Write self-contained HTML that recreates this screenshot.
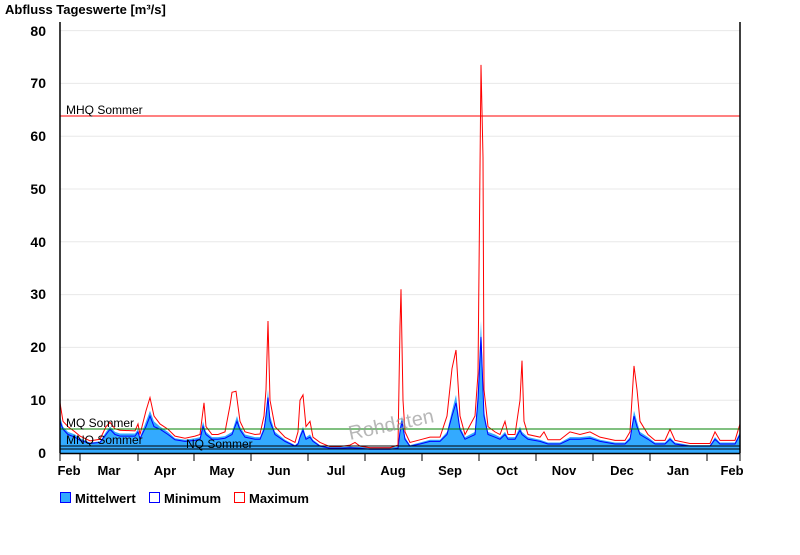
<!DOCTYPE html>
<html><head><meta charset="utf-8"><style>
body{margin:0;background:#fff;width:800px;height:550px;overflow:hidden;font-family:"Liberation Sans",sans-serif}
svg text{font-family:"Liberation Sans",sans-serif}
</style></head><body>
<svg width="800" height="550" xmlns="http://www.w3.org/2000/svg">
<text x="5" y="14" font-size="13" font-weight="bold">Abfluss Tageswerte [m³/s]</text>
<g stroke="#e8e8e8" stroke-width="1">
<line x1="60" x2="740" y1="400.2" y2="400.2"/><line x1="60" x2="740" y1="347.4" y2="347.4"/>
<line x1="60" x2="740" y1="294.6" y2="294.6"/><line x1="60" x2="740" y1="241.8" y2="241.8"/>
<line x1="60" x2="740" y1="189" y2="189"/><line x1="60" x2="740" y1="136.2" y2="136.2"/>
<line x1="60" x2="740" y1="83.4" y2="83.4"/><line x1="60" x2="740" y1="30.6" y2="30.6"/>
</g>
<g font-size="14" font-weight="bold" text-anchor="end">
<text x="46" y="458">0</text><text x="46" y="405">10</text><text x="46" y="352">20</text><text x="46" y="299">30</text>
<text x="46" y="247">40</text><text x="46" y="194">50</text><text x="46" y="141">60</text><text x="46" y="88">70</text><text x="46" y="36">80</text>
</g>
<rect x="60" y="447" width="680" height="6" fill="#33aaff"/>
<g transform="translate(0,453) scale(1,-5.28)">
<polygon fill="#33aaff" points="60,0 60,7 63,5 68,4 75,3.5 80,2.8 90,2 100,2.2 106,4 110,5 115,4 120,3.7 135,3.7 138,4.5 140,3 146,6 150,8 154,6 160,5 168,4 175,2.8 185,2.5 195,2.8 200,3 203,6 206,4 212,3 218,3 225,3.2 232,4 237,7 240,5 245,3.5 255,3 260,3 264,5 266,8 268,12 270,7 275,4 285,2.5 295,1.5 298,2 300,3.5 303,5 306,3 310,3.5 313,2.5 320,1.5 330,1 340,1 350,1.2 360,1 370,0.8 390,0.8 398,1 400,5 402,7 405,3 410,1.5 420,2 430,2.5 440,2.5 447,4 452,8 456,11 460,5 465,3 475,4 478,12 481,25 484,8 488,4 495,3.5 500,3 505,4 508,3 515,3 520,5 522,4 528,3 540,2.5 548,2 560,2 570,3 580,3 590,3.2 600,2.5 615,2 625,2 630,3 634,8 637,6 640,4 648,3 655,2 665,2 670,3 675,2 690,1.5 710,1.5 715,3 720,2 735,2 740,4 740,0"/>
<polyline fill="none" stroke="#0000ff" stroke-width="1" vector-effect="non-scaling-stroke" points="60,6 63,4.5 68,3.5 75,3 80,2.4 90,1.8 100,2 106,3.5 110,4.5 115,3.5 120,3.2 135,3.2 138,4 140,2.7 146,5 150,7 154,5 160,4.5 168,3.5 175,2.5 185,2.2 195,2.4 200,2.6 203,5 206,3.5 212,2.6 218,2.6 225,2.8 232,3.5 237,6 240,4.4 245,3 255,2.6 260,2.6 264,4.4 266,7 268,10.5 270,6 275,3.5 285,2.2 295,1.3 298,1.7 300,3 303,4.3 306,2.6 310,3 313,2.2 320,1.3 330,0.9 340,0.9 350,1 360,0.9 370,0.7 390,0.7 398,0.9 400,4 402,6 405,2.6 410,1.3 420,1.7 430,2.2 440,2.2 447,3.5 452,7 456,9.5 460,4.4 465,2.6 475,3.5 478,10 481,22 484,7 488,3.5 495,3 500,2.6 505,3.5 508,2.6 515,2.6 520,4.3 522,3.5 528,2.6 540,2.2 548,1.7 560,1.7 570,2.6 580,2.6 590,2.8 600,2.2 615,1.7 625,1.7 630,2.6 634,7 637,5 640,3.5 648,2.6 655,1.7 665,1.7 670,2.6 675,1.7 690,1.3 710,1.3 715,2.6 720,1.7 735,1.7 740,3.5"/>
<polyline fill="none" stroke="#ff0000" stroke-width="1" vector-effect="non-scaling-stroke" points="60,9.5 63,6 68,5 75,4 80,3.2 90,2.3 100,2.6 106,5 110,5.8 115,4.6 120,4.3 135,4.2 138,5.5 140,3.5 146,8 150,10.5 154,7 160,5.5 168,4.5 175,3.2 185,2.8 195,3.2 200,3.5 204,9.5 206,5 212,3.5 218,3.5 225,4 230,9 232,11.5 236,11.7 240,6 245,4 255,3.5 260,3.6 264,7 266,12 268,25 270,10 275,5 285,3 295,2 298,4 300,10 303,11 306,5 310,6 313,3 320,2 330,1.2 340,1.2 350,1.5 355,2 360,1.3 370,1 390,1 398,1.5 400,24 401,31 403,10 405,4 410,2 420,2.5 430,3 440,3 447,7 452,16 456,19.5 460,7 465,3.5 475,7 478,15 481,73.5 483,56 484,12 488,5 495,4 500,3.5 505,6 508,3.5 515,3.5 520,10 522,17.5 524,6 528,3.5 540,3 544,4 548,2.5 560,2.5 570,4 580,3.5 590,4 600,3 615,2.4 625,2.4 630,4 634,16.5 637,12 640,6 648,3.5 655,2.4 665,2.4 670,4.5 675,2.4 690,1.8 710,1.8 715,4 720,2.4 735,2.4 740,5.5"/>
</g>
<line x1="60" x2="740" y1="116" y2="116" stroke="#ff0000" stroke-width="1"/>
<line x1="60" x2="740" y1="429" y2="429" stroke="#008000" stroke-width="1"/>
<line x1="60" x2="740" y1="446" y2="446" stroke="#000" stroke-width="1"/>
<line x1="60" x2="740" y1="449" y2="449" stroke="#000" stroke-width="1"/>
<g font-size="12" fill="#000">
<text x="66" y="114">MHQ Sommer</text>
<text x="66" y="427">MQ Sommer</text>
<text x="66" y="444">MNQ Sommer</text>
<text x="186" y="448">NQ Sommer</text>
</g>
<text x="350" y="440" font-size="20" fill="#999" fill-opacity="0.7" transform="rotate(-12 350 440)">Rohdaten</text>
<line x1="60" y1="22" x2="60" y2="453" stroke="#000" stroke-width="1.5"/>
<line x1="740" y1="22" x2="740" y2="453" stroke="#000" stroke-width="1.5"/>
<line x1="60" y1="453.5" x2="740" y2="453.5" stroke="#000" stroke-width="1.5"/>
<g stroke="#000" stroke-width="1">
<line x1="60" x2="60" y1="453" y2="461"/><line x1="80" x2="80" y1="453" y2="461"/><line x1="138" x2="138" y1="453" y2="461"/>
<line x1="194" x2="194" y1="453" y2="461"/><line x1="251" x2="251" y1="453" y2="461"/><line x1="308" x2="308" y1="453" y2="461"/>
<line x1="365" x2="365" y1="453" y2="461"/><line x1="422" x2="422" y1="453" y2="461"/><line x1="479" x2="479" y1="453" y2="461"/>
<line x1="536" x2="536" y1="453" y2="461"/><line x1="593" x2="593" y1="453" y2="461"/><line x1="650" x2="650" y1="453" y2="461"/>
<line x1="707" x2="707" y1="453" y2="461"/><line x1="740" x2="740" y1="453" y2="461"/>
</g>
<g font-size="13" font-weight="bold" text-anchor="middle">
<text x="69" y="475">Feb</text><text x="109" y="475">Mar</text><text x="165" y="475">Apr</text><text x="222" y="475">May</text>
<text x="279" y="475">Jun</text><text x="336" y="475">Jul</text><text x="393" y="475">Aug</text><text x="450" y="475">Sep</text>
<text x="507" y="475">Oct</text><text x="564" y="475">Nov</text><text x="622" y="475">Dec</text><text x="678" y="475">Jan</text><text x="732" y="475">Feb</text>
</g>
<rect x="60.5" y="492.5" width="10" height="10" fill="#33aaff" stroke="#0000ff"/>
<text x="75" y="503" font-size="13" font-weight="bold">Mittelwert</text>
<rect x="149.5" y="492.5" width="10" height="10" fill="#fff" stroke="#0000ff"/>
<text x="164" y="503" font-size="13" font-weight="bold">Minimum</text>
<rect x="234.5" y="492.5" width="10" height="10" fill="#fff" stroke="#ff0000"/>
<text x="249" y="503" font-size="13" font-weight="bold">Maximum</text>
</svg>
</body></html>
